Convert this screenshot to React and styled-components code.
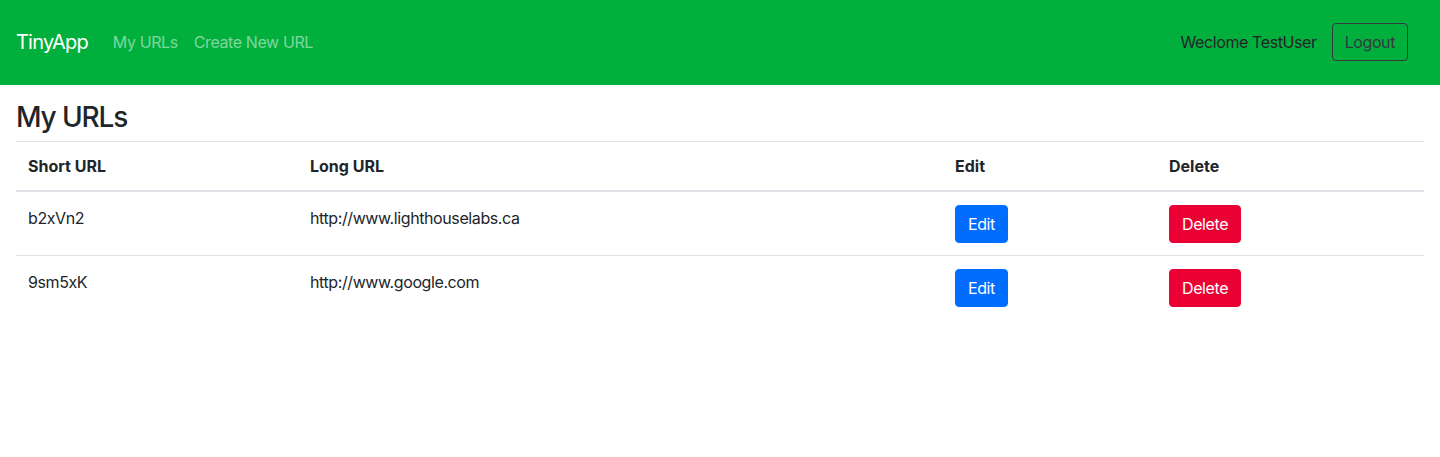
import React from "react";
import styled, { createGlobalStyle } from "styled-components";

const Global = createGlobalStyle`
  html, body { margin: 0; padding: 0; background: #fff; }
  body {
    font-family: Inter, "Noto Sans", "Liberation Sans", sans-serif;
    font-size: 16px;
    line-height: 1.5;
    color: #212529;
    letter-spacing: -0.025em;
  }
  * { box-sizing: border-box; }
`;

const Navbar = styled.nav`
  height: 85px;
  background: #00af3c;
  display: flex;
  align-items: center;
  justify-content: space-between;
  padding: 0 32px 1px 16px;
`;

const Left = styled.div`
  display: flex;
  align-items: center;
`;

const Brand = styled.a`
  font-size: 20px;
  letter-spacing: -0.04em;
  color: #fff;
  text-decoration: none;
  margin-right: 17px;
  line-height: 30px;
`;

const NavLink = styled.a`
  color: rgba(255, 255, 255, 0.5);
  text-decoration: none;
  padding: 8px 8px;
`;

const Right = styled.div`
  display: flex;
  align-items: center;
  gap: 15px;
`;

const Welcome = styled.span`
  color: #212529;
`;

const OutlineButton = styled.button`
  font: inherit;
  letter-spacing: inherit;
  color: #343a40;
  background: transparent;
  border: 1px solid #343a40;
  border-radius: 4px;
  height: 38px;
  padding: 0 12px;
  cursor: pointer;
`;

const Main = styled.main`
  padding: 0 16px;
`;

const Title = styled.h3`
  font-size: 28px;
  font-weight: 500;
  letter-spacing: -0.04em;
  line-height: 1.2;
  margin: 16px 0 6px;
`;

const Table = styled.table`
  width: 100%;
  border-collapse: collapse;
  table-layout: fixed;
`;

const Th = styled.th`
  width: ${(p) => p.$w}px;
  text-align: left;
  font-weight: 700;
  letter-spacing: normal;
  padding: 12px;
  border-top: 1px solid #dee2e6;
  border-bottom: 2px solid #dee2e6;
  vertical-align: bottom;
`;

const Td = styled.td`
  padding: 12px;
  vertical-align: top;
  border-top: 1px solid #dee2e6;
  line-height: 24px;
  padding-top: ${(p) => (p.$text ? 14 : 12)}px;
`;

const Row = styled.tr`
  &:first-child td { border-top: none; }
`;

const ActionButton = styled.button`
  font: inherit;
  letter-spacing: inherit;
  color: #fff;
  background: ${(p) => p.$bg};
  border: 1px solid ${(p) => p.$bg};
  border-radius: 4px;
  height: 38px;
  padding: 0 12px;
  cursor: pointer;
  display: block;
  margin-top: 1px;
`;

const urls = [
  { short: "b2xVn2", long: "http://www.lighthouselabs.ca" },
  { short: "9sm5xK", long: "http://www.google.com" },
];

export default function App() {
  return (
    <>
      <Global />
      <Navbar>
        <Left>
          <Brand href="#">TinyApp</Brand>
          <NavLink href="#">My URLs</NavLink>
          <NavLink href="#">Create New URL</NavLink>
        </Left>
        <Right>
          <Welcome>Weclome TestUser</Welcome>
          <OutlineButton>Logout</OutlineButton>
        </Right>
      </Navbar>
      <Main>
        <Title>My URLs</Title>
        <Table>
          <thead>
            <tr>
              <Th $w={282}>Short URL</Th>
              <Th $w={645}>Long URL</Th>
              <Th $w={214}>Edit</Th>
              <Th>Delete</Th>
            </tr>
          </thead>
          <tbody>
            {urls.map((u) => (
              <Row key={u.short}>
                <Td $text>{u.short}</Td>
                <Td $text>{u.long}</Td>
                <Td>
                  <ActionButton $bg="#006dff">Edit</ActionButton>
                </Td>
                <Td>
                  <ActionButton $bg="#ea0033">Delete</ActionButton>
                </Td>
              </Row>
            ))}
          </tbody>
        </Table>
      </Main>
    </>
  );
}
